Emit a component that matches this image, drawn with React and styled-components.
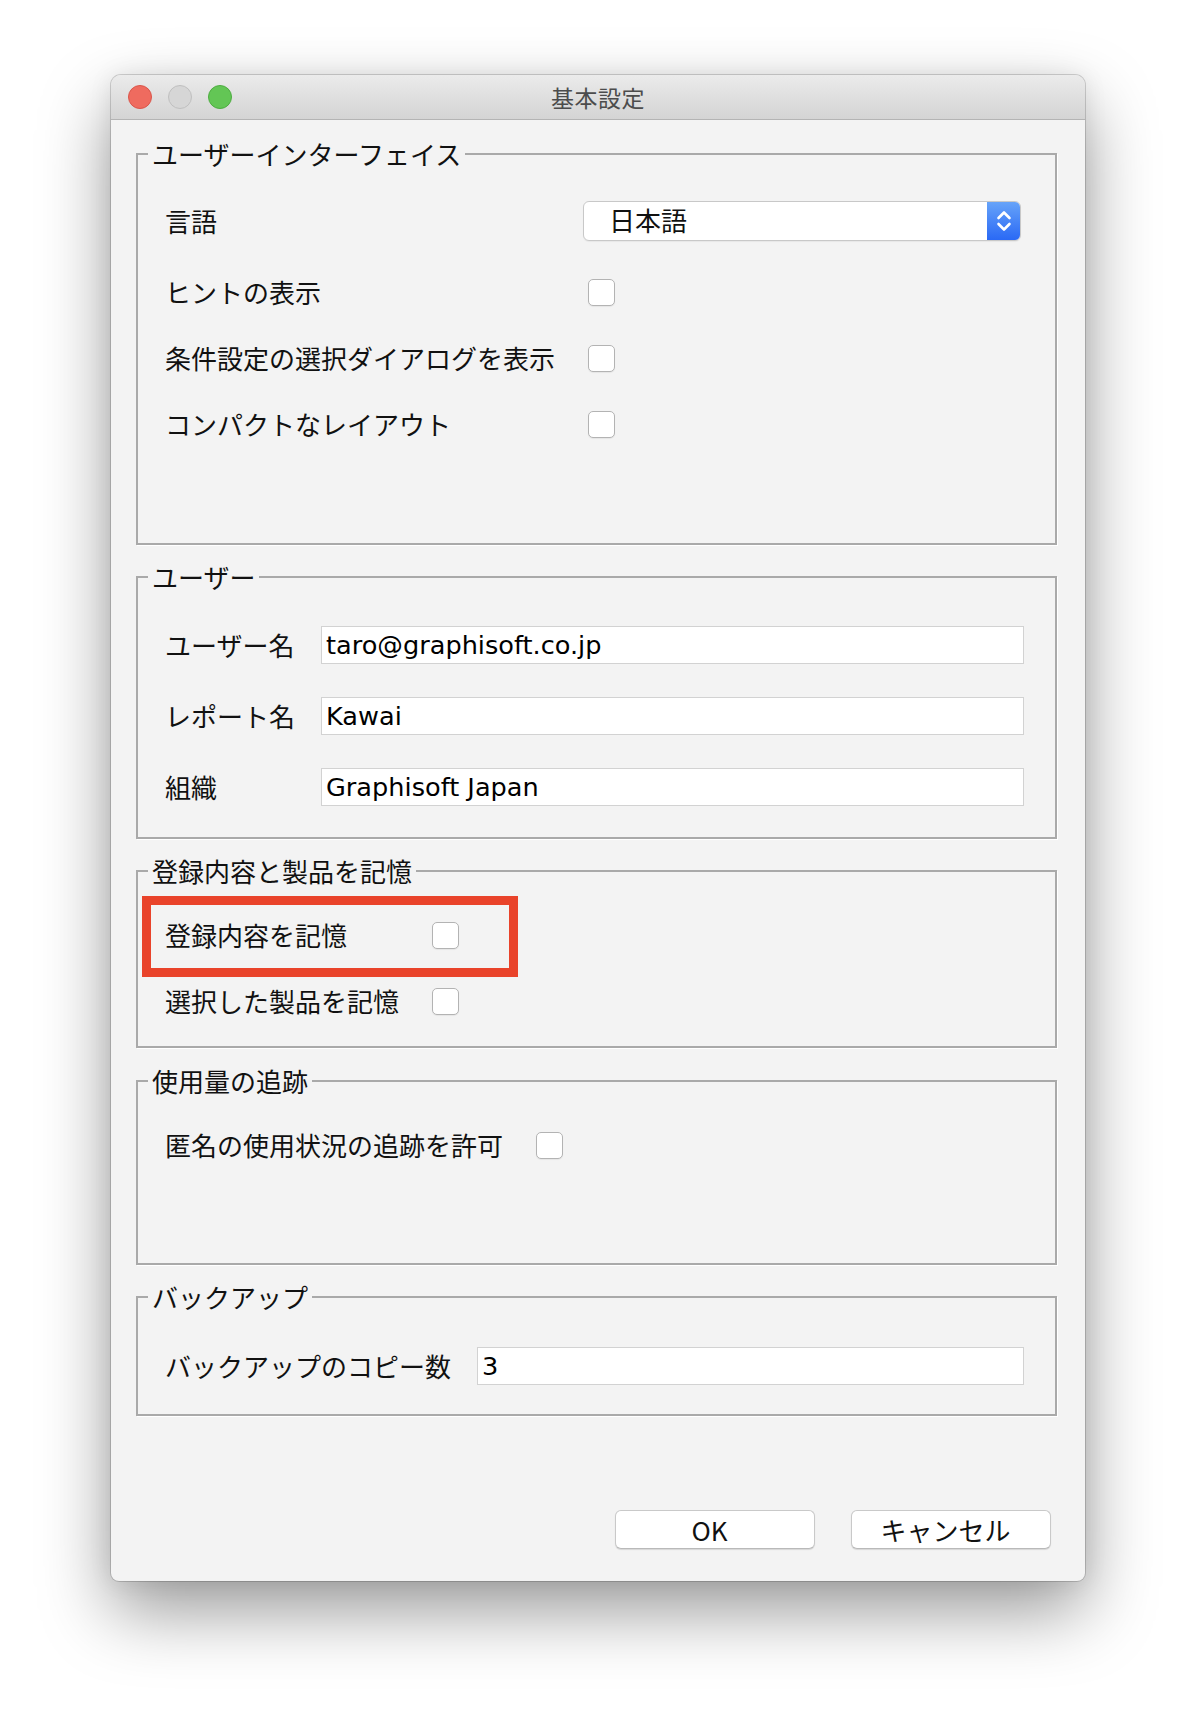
import React from 'react';
import styled, { createGlobalStyle } from 'styled-components';

const GlobalStyle = createGlobalStyle`
  html, body {
    margin: 0;
    background: #fff;
  }
  body {
    font-family: "Noto Sans CJK JP", "Noto Sans", sans-serif;
    color: #111;
  }
`;

const Page = styled.div`
  padding: 75px 0 147px 111px;
`;

const Window = styled.div`
  width: 974px;
  height: 1506px;
  display: flex;
  flex-direction: column;
  background: #f3f3f3;
  border-radius: 10px 10px 8px 8px;
  overflow: hidden;
  box-shadow:
    0 0 0 1px rgba(0, 0, 0, 0.16),
    0 30px 70px rgba(0, 0, 0, 0.4),
    0 0 24px rgba(0, 0, 0, 0.08);
`;

const TitleBar = styled.div`
  height: 44px;
  display: grid;
  grid-template-columns: 1fr auto 1fr;
  align-items: center;
  padding: 0 17px;
  background: linear-gradient(#ebebeb, #d4d4d4);
  border-bottom: 1px solid #b4b4b4;
`;

const Lights = styled.div`
  display: flex;
  gap: 16px;
`;

const Light = styled.span`
  width: 24px;
  height: 24px;
  box-sizing: border-box;
  border-radius: 50%;
  background: ${(p) => p.$fill};
  border: 1px solid ${(p) => p.$edge};
`;

const Title = styled.div`
  font-size: 23px;
  color: #4c4c4c;
  letter-spacing: 0.5px;
`;

const Content = styled.div`
  flex: 1;
  display: flex;
  flex-direction: column;
  gap: 17px;
  padding: 19px 28px 32px 25px;
`;

const Group = styled.fieldset`
  margin: ${(p) => p.$lift || 0}px 0 0;
  padding: 0;
  min-width: 0;
  border: 2px solid #a9a9a9;
  box-shadow: 1px 1px 0 #fff;
`;

const Legend = styled.legend`
  margin-left: 10px;
  padding: 0 4px;
  font-size: 26px;
  line-height: 30px;
  color: #111;
`;

const Grid = styled.div`
  position: relative;
  display: grid;
  grid-template-columns: max-content 1fr;
  grid-template-rows: ${(p) => p.$rows};
  column-gap: 26px;
  row-gap: ${(p) => p.$gap}px;
  align-items: center;
  margin: ${(p) => p.$pad};
`;

const Label = styled.span`
  font-size: 26px;
  line-height: 38px;
  color: #111;
  white-space: nowrap;
`;

const Check = styled.input.attrs({ type: 'checkbox' })`
  appearance: none;
  margin: 0 0 0 7px;
  justify-self: start;
  width: 27px;
  height: 27px;
  box-sizing: border-box;
  border: 1px solid #b3b3b3;
  border-radius: 5px;
  background: #fff;
  box-shadow: 0 1px 1px rgba(0, 0, 0, 0.06);
`;

const Field = styled.input`
  height: 38px;
  box-sizing: border-box;
  margin: 0;
  padding: 0 4px;
  border: 1px solid #d2d2d2;
  background: #fff;
  font-family: "DejaVu Sans", "Noto Sans CJK JP", sans-serif;
  font-size: 25.6px;
  color: #000;
  outline: none;
`;

const Popup = styled.div`
  height: 38px;
  margin: 0 3px 0 2px;
  display: flex;
  border: 1px solid #c8c8c8;
  border-radius: 6px;
  background: #fff;
  overflow: hidden;
  box-shadow: 0 1px 1px rgba(0, 0, 0, 0.05);
`;

const PopupValue = styled.span`
  flex: 1;
  padding-left: 25px;
  font-size: 26px;
  line-height: 36px;
  color: #111;
`;

const Stepper = styled.span`
  width: 33px;
  display: flex;
  align-items: center;
  justify-content: center;
  background: linear-gradient(#66a3f9, #2a69f5);
`;

/* red callout drawn over the first row of its group */
const Highlight = styled.div`
  position: absolute;
  left: -23px;
  top: -20px;
  width: 376px;
  height: 81px;
  box-sizing: border-box;
  border: 9px solid #e9432a;
  pointer-events: none;
`;

const Footer = styled.div`
  margin-top: auto;
  display: flex;
  justify-content: flex-end;
  gap: 36px;
  padding-right: 6px;
`;

const Button = styled.button`
  width: 200px;
  height: 39px;
  margin: 0;
  padding: 0 11px 0 0;
  border: 1px solid #c9c9c9;
  border-bottom-color: #b9b9b9;
  border-radius: 6px;
  background: #fff;
  box-shadow: 0 1px 1px rgba(0, 0, 0, 0.12);
  font-family: "Noto Sans CJK JP", "Noto Sans", sans-serif;
  font-size: 26px;
  line-height: 37px;
  color: #111;
`;

const Chevrons = () => (
  <svg width="18" height="28" viewBox="0 0 18 28" fill="none">
    <path d="M3.5 11 L9 5.5 L14.5 11" stroke="#fff" strokeWidth="2.6" strokeLinecap="round" strokeLinejoin="round" />
    <path d="M3.5 17 L9 22.5 L14.5 17" stroke="#fff" strokeWidth="2.6" strokeLinecap="round" strokeLinejoin="round" />
  </svg>
);

const lights = [
  { fill: '#ef6b5f', edge: '#d9564b' },
  { fill: '#d6d6d6', edge: '#bfbfbf' },
  { fill: '#63c655', edge: '#4eac41' },
];

const uiToggles = ['ヒントの表示', '条件設定の選択ダイアログを表示', 'コンパクトなレイアウト'];

const userFields = [
  { label: 'ユーザー名', value: 'taro@graphisoft.co.jp' },
  { label: 'レポート名', value: 'Kawai' },
  { label: '組織', value: 'Graphisoft Japan' },
];

export default function App() {
  return (
    <Page>
      <GlobalStyle />
      <Window>
        <TitleBar>
          <Lights>
            {lights.map((l) => (
              <Light key={l.fill} $fill={l.fill} $edge={l.edge} />
            ))}
          </Lights>
          <Title>基本設定</Title>
          <span />
        </TitleBar>

        <Content>
          <Group>
            <Legend>ユーザーインターフェイス</Legend>
            <Grid $pad="28px 31px 100px 27px" $rows="48px repeat(3, 38px)" $gap={28}>
              <Label>言語</Label>
              <Popup>
                <PopupValue>日本語</PopupValue>
                <Stepper>
                  <Chevrons />
                </Stepper>
              </Popup>
              {uiToggles.map((t) => (
                <React.Fragment key={t}>
                  <Label>{t}</Label>
                  <Check />
                </React.Fragment>
              ))}
            </Grid>
          </Group>

          <Group>
            <Legend>ユーザー</Legend>
            <Grid $pad="34px 31px 31px 27px" $rows="repeat(3, 38px)" $gap={33}>
              {userFields.map((f) => (
                <React.Fragment key={f.label}>
                  <Label>{f.label}</Label>
                  <Field defaultValue={f.value} />
                </React.Fragment>
              ))}
            </Grid>
          </Group>

          <Group>
            <Legend>登録内容と製品を記憶</Legend>
            <Grid $pad="30px 31px 26px 27px" $rows="repeat(2, 38px)" $gap={28}>
              <Label>登録内容を記憶</Label>
              <Check />
              <Label>選択した製品を記憶</Label>
              <Check />
              <Highlight />
            </Grid>
          </Group>

          <Group $lift={1}>
            <Legend>使用量の追跡</Legend>
            <Grid $pad="30px 31px 99px 27px" $rows="38px" $gap={0}>
              <Label>匿名の使用状況の追跡を許可</Label>
              <Check />
            </Grid>
          </Group>

          <Group>
            <Legend>バックアップ</Legend>
            <Grid $pad="35px 31px 29px 27px" $rows="38px" $gap={0}>
              <Label>バックアップのコピー数</Label>
              <Field defaultValue="3" />
            </Grid>
          </Group>

          <Footer>
            <Button>OK</Button>
            <Button>キャンセル</Button>
          </Footer>
        </Content>
      </Window>
    </Page>
  );
}
